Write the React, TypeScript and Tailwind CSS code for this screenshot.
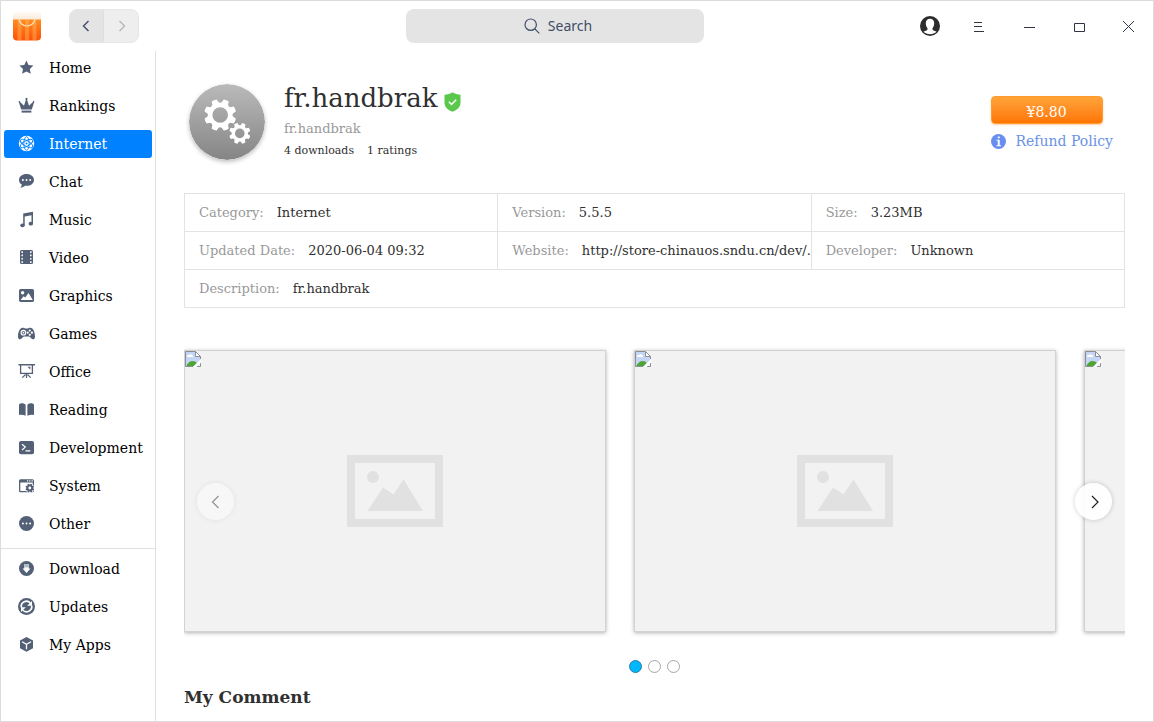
import { useState } from "react";
import type { ReactNode } from "react";

function gearPath(cx: number, cy: number, outer: number, inner: number, hole: number, teeth: number) {
  const step = (Math.PI * 2) / teeth;
  const point = (r: number, a: number) =>
    `${(cx + r * Math.cos(a)).toFixed(2)} ${(cy + r * Math.sin(a)).toFixed(2)}`;
  let d = "";
  for (let i = 0; i < teeth; i++) {
    const a = i * step + step / 2;
    d += `${i === 0 ? "M" : "L"}${point(inner, a - step * 0.34)}`;
    d += `L${point(outer, a - step * 0.22)}`;
    d += `Q${point(outer * 1.04, a)} ${point(outer, a + step * 0.22)}`;
    d += `L${point(inner, a + step * 0.34)}`;
    d += `Q${point(inner * 0.92, a + step * 0.5)} ${point(inner, a + step * 0.66)}`;
  }
  d += `Z M${cx - hole} ${cy}a${hole} ${hole} 0 1 0 ${hole * 2} 0a${hole} ${hole} 0 1 0 ${-hole * 2} 0Z`;
  return d;
}

const icons: Record<string, ReactNode> = {
  Home: (
    <path d="M8.4 1.4l2.100 4.500 4.900.6-3.600 3.400.9 4.900-4.300-2.400-4.300 2.400.9-4.900L1.400 6.500l4.900-.6z" />
  ),
  Rankings: (
    <>
      <path d="M8.5.8a1.100 1.100 0 0 1 .6 2l1.900 6 3.900-3.900a.8.8 0 1 1 1.100.6l-2.200 6.900H3.200L1 5.500a.8.8 0 1 1 1.100-.6L6 8.800l1.900-6a1.100 1.100 0 0 1 .6-2z" />
      <path d="M3.600 13.600h9.800v2H3.600z" />
    </>
  ),
  Internet: (
    <>
      <circle cx="8.5" cy="8.5" r="7.7" />
      <g fill="none" stroke="#0081ff" strokeWidth=".9">
        <ellipse cx="8.500" cy="8.500" rx="6.800" ry="2.700" transform="rotate(30 8.5 8.5)" />
        <ellipse cx="8.500" cy="8.500" rx="6.800" ry="2.700" transform="rotate(90 8.5 8.5)" />
        <ellipse cx="8.500" cy="8.500" rx="6.800" ry="2.700" transform="rotate(150 8.5 8.5)" />
      </g>
      <circle cx="8.500" cy="8.500" r="1" fill="#0081ff" />
    </>
  ),
  Chat: (
    <>
      <path d="M8.500 1C4.300 1 1 3.500 1 6.900c0 2 1.100 3.700 2.800 4.700-.1 1.200-.6 2.200-1.300 3.100 1.800-.2 3.300-.9 4.500-2 .5.1 1 .1 1.500.1 4.200 0 7.500-2.500 7.500-5.900S12.700 1 8.500 1z" />
      <g fill="#fff">
        <circle cx="4.900" cy="6.900" r="1" />
        <circle cx="8.500" cy="6.900" r="1" />
        <circle cx="12.100" cy="6.900" r="1" />
      </g>
    </>
  ),
  Music: (
    <>
      <path d="M5.200 2.500L15 .8v11.900h-1.500V4.300l-6.800 1.200v8.900H5.200z" />
      <ellipse cx="4.500" cy="14.300" rx="2.200" ry="1.900" />
      <ellipse cx="12.800" cy="12.700" rx="2.200" ry="1.900" />
    </>
  ),
  Video: (
    <>
      <rect x="2" y="1" width="13" height="14" rx="1.500" />
      <path
        d="M4.200 2.300v12M12.800 2.300v12"
        stroke="#fff"
        strokeWidth="1.500"
        strokeDasharray="1.700 1.600"
      />
    </>
  ),
  Graphics: (
    <>
      <rect x="1" y="2" width="15" height="13" rx="1.700" />
      <g fill="#fff">
        <circle cx="4.600" cy="5.700" r="1.700" />
        <path d="M2.600 13l3-3.800 1.700 1.300 3.200-4.500L14.800 13z" />
      </g>
    </>
  ),
  Games: (
    <>
      <path d="M4.700 2.800c1.300 0 1.600.6 2.700.6h2.200c1.100 0 1.400-.6 2.700-.6 3 0 4.700 4.700 4.700 8.600 0 1.700-.7 2.900-1.900 2.900-1.800 0-2.500-2.900-4.200-2.900H6.100c-1.700 0-2.400 2.900-4.200 2.900C.7 14.300 0 13.100 0 11.400c0-3.900 1.700-8.600 4.700-8.600z" />
      <circle cx="5.400" cy="7.700" r="2.300" fill="none" stroke="#fff" strokeWidth="1.100" />
      <circle cx="5.400" cy="7.700" r=".9" fill="#fff" />
      <g fill="#fff">
        <circle cx="11.800" cy="5.600" r="1.100" />
        <circle cx="11.800" cy="9.800" r="1.100" />
        <circle cx="9.700" cy="7.700" r="1.100" />
        <circle cx="13.900" cy="7.700" r="1.100" />
      </g>
    </>
  ),
  Office: (
    <>
      <rect x=".5" y="1" width="16.500" height="1.500" />
      <path d="M2.600 2v8.400h11.800V2" fill="none" stroke="currentColor" strokeWidth="1.300" />
      <path d="M8.500 10.500v4.500M7.500 11.500l-3.200 3.200M9.500 11.500l3.200 3.200" fill="none" stroke="currentColor" strokeWidth="1.200" />
      <path d="M9.500 3.800h2.900v3z" />
    </>
  ),
  Reading: (
    <>
      <path d="M1 4c0-1 .6-1.500 1.600-1.600 1.900-.2 3.700.2 5 1.300v11.100C5.800 13.900 3.400 13.600 1 14z" />
      <path d="M16 4c0-1-.6-1.500-1.600-1.600-1.900-.2-3.700.2-5 1.300v11.100c1.800-.9 4.200-1.200 6.600-.8z" />
    </>
  ),
  Development: (
    <>
      <rect x="1" y="2" width="15" height="13.300" rx="2" />
      <path d="M4 5.200l3.300 2.900L4 11M7.500 11.800h4.800" fill="none" stroke="#fff" strokeWidth="1.200" />
    </>
  ),
  System: (
    <>
      <path
        fillRule="evenodd"
        d="M2.500 2.300h12A1.500 1.500 0 0 1 16 3.800v10a1.500 1.500 0 0 1-1.500 1.500h-12A1.500 1.500 0 0 1 1 13.800v-10a1.500 1.500 0 0 1 1.500-1.500zM2.300 5.600V14h12.400V5.600z"
      />
      <path d="M9 3.900h1.200M11.300 3.900h1.200M13.600 3.900h1.200" stroke="#fff" strokeWidth="1.100" />
      <circle cx="11.800" cy="11" r="4.700" fill="#fff" />
      <path fillRule="evenodd" d={gearPath(11.8, 11, 4.4, 3.6, 1.4, 8)} />
    </>
  ),
  Other: (
    <>
      <circle cx="8.500" cy="8.500" r="7.500" />
      <g fill="#fff">
        <circle cx="4.900" cy="8.500" r="1" />
        <circle cx="8.500" cy="8.500" r="1" />
        <circle cx="12.100" cy="8.500" r="1" />
      </g>
    </>
  ),
  Download: (
    <>
      <circle cx="8.500" cy="8.500" r="7.500" />
      <path d="M6.200 4h4.600v4.600h1.700l-4 4.400-4-4.400h1.700z" fill="#fff" />
      <path d="M6.200 4h4.600v3.400H6.200z" fill="#b4bac6" />
    </>
  ),
  Updates: (
    <>
      <circle cx="8.500" cy="8.500" r="8.500" />
      <g fill="none" stroke="#fff" strokeWidth="1.700">
        <path d="M3.300 9.300A5.200 5.200 0 0 1 12.300 5" />
        <path d="M13.700 7.700A5.200 5.200 0 0 1 4.700 12" />
      </g>
      <path d="M14 3v4.800H9.200zM3 14V9.200h4.800z" fill="#fff" />
    </>
  ),
  "My Apps": (
    <>
      <path d="M8.500 1l6.500 3.500v7.800l-6.500 3.500L2 12.300V4.500z" />
      <path d="M4 5.800l4.500 2.500L13 5.800M8.500 8.300v5" fill="none" stroke="#fff" strokeWidth="1.300" />
    </>
  ),
};

const categories = [
  "Home", "Rankings", "Internet", "Chat", "Music", "Video", "Graphics",
  "Games", "Office", "Reading", "Development", "System", "Other",
];
const personal = ["Download", "Updates", "My Apps"];

function NavItem({ name, active }: { name: string; active: boolean }) {
  return (
    <a
      href="#"
      aria-current={active ? "page" : undefined}
      className={`flex h-7 items-center gap-[13px] rounded-[3px] pl-3.5 text-sm whitespace-nowrap ${
        active ? "bg-[#0081ff] text-white" : "text-black"
      }`}
    >
      <svg
        viewBox="0 0 18 18"
        fill="currentColor"
        aria-hidden="true"
        className={`size-[18px] shrink-0 ${active ? "text-white" : "text-[#536076]"}`}
      >
        {icons[name]}
      </svg>
      {name}
    </a>
  );
}

function NavChevron({ d }: { d: string }) {
  return (
    <svg viewBox="0 0 16 16" className="size-4" fill="none" stroke="currentColor" strokeWidth="1.400" aria-hidden="true">
      <path d={d} />
    </svg>
  );
}

function WindowButton({ label, children }: { label: string; children: ReactNode }) {
  return (
    <button type="button" aria-label={label} className="flex h-full w-[50px] items-center justify-center text-[#303544]">
      {children}
    </button>
  );
}

function TitleBar() {
  return (
    <header className="grid h-[50px] shrink-0 grid-cols-[405fr_298px_449fr] items-center">
      <div className="flex items-center gap-[26px] pl-3">
        <svg viewBox="0 0 30 30" className="size-[30px]" aria-hidden="true">
          <defs>
            <linearGradient id="bag" x1="0" y1="0" x2="0" y2="1">
              <stop offset="0" stopColor="#ff8a1e" />
              <stop offset="1" stopColor="#ff5207" />
            </linearGradient>
            <linearGradient id="bagTop" x1="0" y1="0" x2="0" y2="1">
              <stop offset="0" stopColor="#fffaf5" />
              <stop offset="1" stopColor="#f6dcc4" />
            </linearGradient>
          </defs>
          <rect y="1" width="28" height="14" x="0" rx="3" fill="url(#bagTop)" />
          <path d="M0 8.500h28v17a4 4 0 0 1-4 4h-20a4 4 0 0 1-4-4z" fill="url(#bag)" />
          <path d="M4.500 8.500h4v21h-4zM12 8.500h4v21h-4zM19.500 8.500h4v21h-4z" fill="#ffc06a" opacity=".4" />
          <path d="M6 7.500a8 7.500 0 0 0 16 0" fill="none" stroke="#ffe3bd" strokeWidth="1.200" />
        </svg>
        <div className="flex h-[34px] overflow-hidden rounded-lg border border-[#e6e6e6] bg-[#eeeeee]">
          <button type="button" aria-label="Back" className="flex w-[34px] items-center justify-center border-r border-[#dedede] bg-[#e4e4e4] text-[#414d68]">
            <NavChevron d="M9.500 3L4.500 8l5 5" />
          </button>
          <button type="button" aria-label="Forward" disabled className="flex w-[34px] items-center justify-center text-[#b3b5ba]">
            <NavChevron d="M6.500 3l5 5-5 5" />
          </button>
        </div>
      </div>
      <button type="button" className="flex h-[34px] items-center justify-center gap-2 rounded-lg bg-[#e4e4e4] pl-1.5 font-['Noto_Sans',sans-serif] text-sm text-[#414d68]">
        <svg viewBox="0 0 16 16" className="size-4" fill="none" stroke="currentColor" strokeWidth="1.200" aria-hidden="true">
          <circle cx="6.700" cy="6.700" r="5.700" />
          <path d="M10.800 10.800L15.300 15.300" />
        </svg>
        Search
      </button>
      <div className="flex h-full justify-end">
        <WindowButton label="Account">
          <svg viewBox="-4 0 24 20" className="h-5 w-6" aria-hidden="true">
            <circle cx="10" cy="10" r="10" fill="#2c2c2e" />
            <path
              d="M10 2.800c2.600 0 4.200 1.700 4.200 4.300 0 2.200-.5 3.900-1.700 5.100v1.300c.2 1 3 1.400 4 2.300-1.500 1.500-3.900 2.500-6.500 2.500s-5-1-6.500-2.500c1-.9 3.800-1.300 4-2.300v-1.300C6.300 11 5.800 9.300 5.800 7.100c0-2.600 1.600-4.300 4.200-4.300z"
              fill="#fff"
            />
          </svg>
        </WindowButton>
        <WindowButton label="Menu">
          <svg viewBox="0 0 12 12" className="size-3" stroke="currentColor" aria-hidden="true">
            <path d="M2 2.500h8M2 6.500h8M2 11.500h10" />
          </svg>
        </WindowButton>
        <WindowButton label="Minimize">
          <svg viewBox="0 0 14 12" className="h-3 w-3.5" stroke="currentColor" aria-hidden="true">
            <path d="M3 7.500h11" />
          </svg>
        </WindowButton>
        <WindowButton label="Maximize">
          <svg viewBox="0 0 14 12" className="h-3 w-3.5" stroke="currentColor" fill="none" aria-hidden="true">
            <path d="M3.500 3.500h10v8h-10z" />
          </svg>
        </WindowButton>
        <WindowButton label="Close">
          <svg viewBox="0 0 12 12" className="size-3" stroke="currentColor" aria-hidden="true">
            <path d="M1 1l11 11M12 1L1 12" />
          </svg>
        </WindowButton>
      </div>
    </header>
  );
}

function Summary() {
  return (
    <section className="flex items-start">
      <svg viewBox="0 0 76 76" className="mt-0.5 ml-[5px] size-[76px] shrink-0 rounded-full shadow-[0_2px_4px_rgba(0,0,0,0.25)]" aria-hidden="true">
        <defs>
          <linearGradient id="disc" x1="0" y1="0" x2="0" y2="1">
            <stop offset="0" stopColor="#bababa" />
            <stop offset="1" stopColor="#858585" />
          </linearGradient>
        </defs>
        <circle cx="38" cy="38" r="38" fill="url(#disc)" />
        <path fill="#fff" fillRule="evenodd" d={gearPath(31.2, 31, 16, 12.8, 7.8, 8)} />
        <path fill="#fff" fillRule="evenodd" d={gearPath(50.8, 49.4, 10.6, 8.4, 4.8, 8)} />
      </svg>
      <div className="ml-[19px] flex-1 text-[#303030]">
        <h1 className="flex items-center gap-[7px] text-[26px] leading-8">
          fr.handbrak
          <svg viewBox="0 0 17 20" className="mt-2 h-5 w-[17px]" role="img" aria-label="Verified">
            <path d="M8.500.3c2.300 1.500 5 2.300 8 2.400v8c0 4.300-3.300 7.200-8 9-4.700-1.800-8-4.700-8-9v-8c3-.1 5.700-.9 8-2.400z" fill="#5ac84a" />
            <path d="M4.800 9.700l2.700 2.700 4.700-4.700" fill="none" stroke="#fff" strokeWidth="1.400" />
          </svg>
        </h1>
        <p className="mt-[5px] text-[13px] leading-5 text-[#999999]">fr.handbrak</p>
        <p className="mt-0.5 flex gap-[13px] text-[11px] leading-5">
          <span>4 downloads</span>
          <span>1 ratings</span>
        </p>
      </div>
      <div className="mt-3.5 mr-3 text-sm">
        <button type="button" className="h-7 w-28 rounded-[4px] border border-[#ff9a2e] bg-linear-to-b from-[#ffa437] to-[#ff7500] pt-1 leading-5 text-white shadow-[0_1px_2px_rgba(255,117,0,0.35)]">
          ¥8.80
        </button>
        <a href="#" className="mt-[7px] flex items-center gap-[9px] leading-5 text-[#6b92e6]">
          <svg viewBox="0 0 16 16" className="size-4" aria-hidden="true">
            <circle cx="7.500" cy="8.500" r="7.500" fill="#688ef0" />
            <path d="M6.800 3.500h1.900v1.800H6.800zM5.500 6.800h3.200v5.400h1.300v1H5.400v-1h1.400V7.800H5.500z" fill="#fff" />
          </svg>
          Refund Policy
        </a>
      </div>
    </section>
  );
}

function Cell({ label, value, span = 1 }: { label: string; value: string; span?: number }) {
  return (
    <td colSpan={span} className="h-[38px] overflow-hidden border border-[#e3e3e3] pl-3.5 whitespace-nowrap">
      <span className="mr-[13px] text-[#999999]">{label}</span>
      <span>{value}</span>
    </td>
  );
}

function Details() {
  return (
    <table className="mt-8 w-full table-fixed border-collapse text-[13px] leading-5 text-[#303030]">
      <tbody>
        <tr>
          <Cell label="Category:" value="Internet" />
          <Cell label="Version:" value="5.5.5" />
          <Cell label="Size:" value="3.23MB" />
        </tr>
        <tr>
          <Cell label="Updated Date:" value="2020-06-04 09:32" />
          <Cell label="Website:" value="http://store-chinauos.sndu.cn/dev/." />
          <Cell label="Developer:" value="Unknown" />
        </tr>
        <tr>
          <Cell label="Description:" value="fr.handbrak" span={3} />
        </tr>
      </tbody>
    </table>
  );
}

function Screenshot() {
  return (
    <li className="relative flex h-[282px] w-[422px] shrink-0 items-center justify-center border border-[#d2d2d2] bg-[#f2f2f2] shadow-[0_1px_4px_rgba(0,0,0,0.3)]">
      <svg viewBox="0 0 16 16" className="absolute top-0 left-0 size-4" role="img" aria-label="Image unavailable">
        <path d="M.5.5h10l5 5v3.500L9 15.500H.5z" fill="#c4d5f5" />
        <path d="M2 5.500a1.500 1.500 0 0 1 2-1.500 2 2 0 0 1 3.500.5 1 1 0 0 1 .5 1.500H2z" fill="#fff" />
        <path d="M1 15.500c1.500-3.500 4-5.500 6.500-5.500 2 0 3.500.8 4.300 2L8.500 15.500z" fill="#4fa533" />
        <path d="M8 15.500H.5V.5h10" fill="none" stroke="#8a8f94" />
        <path d="M10.500.5v5h5z" fill="#fff" stroke="#8a8f94" />
        <path d="M15.500 5.500V8M11.500 15.500h4V12" fill="none" stroke="#8a8f94" />
        <path d="M16 8L8 16h3.500l4.500-4.500z" fill="#fff" />
      </svg>
      <svg viewBox="0 0 96 72" className="h-[72px] w-24" fill="#e1e1e1" aria-hidden="true">
        <path fillRule="evenodd" d="M0 0h96v72H0zM8 8v56h80V8z" />
        <circle cx="26" cy="22" r="6" />
        <path d="M20.500 56l15.500-23.500 10.500 7 10-15L76 56z" />
      </svg>
    </li>
  );
}

function SlideChevron({ d }: { d: string }) {
  return (
    <svg viewBox="0 0 16 16" className="size-4" fill="none" stroke="currentColor" strokeWidth="1.200" aria-hidden="true">
      <path d={d} />
    </svg>
  );
}

function Gallery() {
  const [page, setPage] = useState(0);
  return (
    <section aria-label="Screenshots">
      <div className="relative mt-[34px]">
        <ul className="flex gap-7 overflow-hidden py-2">
          <Screenshot />
          <Screenshot />
          <Screenshot />
        </ul>
        <button
          type="button"
          aria-label="Previous screenshot"
          disabled={page === 0}
          onClick={() => setPage(page - 1)}
          className="absolute top-[141px] left-[13px] flex size-[37px] items-center justify-center rounded-full bg-white/90 text-[#202020] shadow-[0_0_5px_rgba(0,0,0,0.15)] disabled:opacity-45"
        >
          <SlideChevron d="M10.500 2L4.500 8l6 6" />
        </button>
        <button
          type="button"
          aria-label="Next screenshot"
          disabled={page === 2}
          onClick={() => setPage(page + 1)}
          className="absolute top-[141px] right-[13px] flex size-[37px] items-center justify-center rounded-full bg-white/90 text-[#202020] shadow-[0_0_5px_rgba(0,0,0,0.2)] disabled:opacity-45"
        >
          <SlideChevron d="M6 2l6 6-6 6" />
        </button>
      </div>
      <div className="mt-5 flex justify-center gap-1.5">
        {[0, 1, 2].map((i) => (
          <input
            key={i}
            type="radio"
            name="screenshot"
            aria-label={`Screenshot ${i + 1}`}
            checked={page === i}
            onChange={() => setPage(i)}
            className="size-[13px] appearance-none rounded-full border border-[#a6a6a6] bg-white checked:border-[#2b7fae] checked:bg-[#00b7fc]"
          />
        ))}
      </div>
    </section>
  );
}

export default function App() {
  return (
    <div className="flex h-screen flex-col overflow-hidden border border-[#dcdcdc] bg-white font-['DejaVu_Serif',serif]">
      <TitleBar />
      <div className="flex min-h-0 flex-1">
        <nav className="w-[155px] shrink-0 border-r border-[#e0e0e0] pt-[3px]">
          <div className="flex flex-col gap-2.5 px-[3px] pb-2.5">
            {categories.map((name) => (
              <NavItem key={name} name={name} active={name === "Internet"} />
            ))}
          </div>
          <div className="flex flex-col gap-2.5 border-t border-[#e0e0e0] px-[3px] pt-1.5">
            {personal.map((name) => (
              <NavItem key={name} name={name} active={false} />
            ))}
          </div>
        </nav>
        <main className="min-w-0 flex-1 overflow-hidden px-7 pt-[31px]">
          <Summary />
          <Details />
          <Gallery />
          <h2 className="mt-3 text-[17px] leading-6 font-bold text-[#303030]">My Comment</h2>
        </main>
      </div>
    </div>
  );
}
